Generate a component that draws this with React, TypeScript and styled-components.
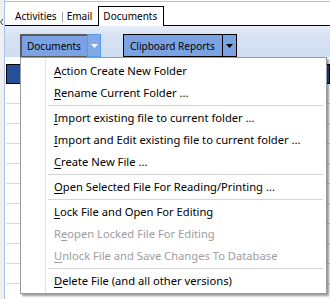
import React from "react";
import styled, { createGlobalStyle } from "styled-components";

const GlobalStyle = createGlobalStyle`
  html, body {
    margin: 0;
    padding: 0;
    background: #ffffff;
  }
  body {
    font-family: "Noto Sans", "Open Sans", sans-serif;
    color: #000;
  }
`;

const Frame = styled.div`
  position: relative;
  width: 330px;
  height: 299px;
  overflow: hidden;
  display: flex;
  background: #ffffff;
`;

const Rail = styled.div`
  width: 4px;
  flex: none;
  background: #f0f0f0;
  border-right: 1px solid #a9c4ea;
  padding-top: 8px;
  box-sizing: content-box;
`;

const Main = styled.div`
  flex: 1;
  display: flex;
  flex-direction: column;
  padding-top: 1px;
  min-width: 0;
`;

const TabStrip = styled.div`
  height: 23px;
  flex: none;
  display: flex;
  align-items: flex-end;
  padding-left: 3px;
  border-top: 1px solid #a9c4ea;
  border-bottom: 1px solid #000;
  background: #ffffff;
`;

const Tab = styled.div<{ $active?: boolean; $divider?: boolean }>`
  position: relative;
  height: ${(p) => (p.$active ? "19px" : "19px")};
  padding: 0 6px 0 ${(p) => (p.$active ? "4px" : "7px")};
  display: flex;
  align-items: center;
  font-size: 10px;
  box-sizing: border-box;
  background: #ffffff;
  ${(p) =>
    p.$active &&
    `
    border: 1px solid #000;
    border-bottom: none;
    margin-bottom: -1px;
    height: 20px;
    padding-bottom: 1px;
  `}
  &::after {
    content: "";
    display: ${(p) => (p.$divider ? "block" : "none")};
    position: absolute;
    right: 0;
    top: 6px;
    height: 10px;
    width: 1px;
    background: #a0a0a0;
  }
`;

const Toolbar = styled.div`
  height: 31px;
  flex: none;
  display: flex;
  align-items: flex-start;
  padding: 8px 0 0 15px;
  box-sizing: border-box;
  background: linear-gradient(#e7eef9, #d6e2f3 30%, #d0dcf1);
`;

const SplitButton = styled.div`
  display: flex;
  height: 23px;
  margin-right: 22px;
`;

const MainPart = styled.div<{ $style: "pressed" | "plain" }>`
  display: flex;
  align-items: center;
  font-size: 10px;
  background: #7ba3e4;
  box-sizing: border-box;
  ${(p) =>
    p.$style === "pressed"
      ? `
    border-top: 2px solid #5a5a5a;
    border-left: 2px solid #5a5a5a;
    border-bottom: 1px solid #5a5a5a;
    padding: 0 6px 0 5px;
    width: 67px;
  `
      : `
    border: 1px solid #000;
    padding: 0 6px;
    width: 100px;
  `}
`;

const ArrowPart = styled.div<{ $style: "pressed" | "plain" }>`
  width: 14px;
  display: flex;
  align-items: center;
  justify-content: center;
  box-sizing: border-box;
  background: ${(p) => (p.$style === "pressed" ? "#82a8e8" : "#7ba3e4")};
  border: 1px solid ${(p) => (p.$style === "pressed" ? "#4f9cf0" : "#000")};
  ${(p) => p.$style === "plain" && "border-left: none;"}
`;

const GridArea = styled.div`
  flex: 1;
  display: flex;
  flex-direction: column;
  padding: 7px 0 0 1px;
  background: #ffffff;
`;

const GridRow = styled.div<{ $selected?: boolean }>`
  height: 20px;
  flex: none;
  box-sizing: border-box;
  background: ${(p) => (p.$selected ? "#24509a" : "#ffffff")};
  border: ${(p) => (p.$selected ? "1px solid #000" : "none")};
  border-bottom: 1px solid ${(p) => (p.$selected ? "#000" : "#d9d9d9")};
`;

const Menu = styled.div`
  position: absolute;
  left: 20px;
  top: 57px;
  width: 307px;
  box-sizing: border-box;
  padding: 2px 2px 1px;
  border: 1px solid #9a9a9a;
  background: #ffffff
    linear-gradient(90deg, transparent 24px, #e2e2e2 24px, #e2e2e2 25px, transparent 25px);
  box-shadow: 2px 2px 2px rgba(0, 0, 0, 0.4);
  display: flex;
  flex-direction: column;
`;

const Item = styled.div<{ $disabled?: boolean }>`
  height: 22px;
  line-height: 22px;
  padding-left: 31px;
  font-size: 11.2px;
  white-space: nowrap;
  color: ${(p) => (p.$disabled ? "#9d9d9d" : "#000")};
`;

const Key = styled.span`
  text-decoration: underline;
  text-underline-offset: 2px;
`;

const Separator = styled.div`
  height: 1px;
  margin: 1px 1px 1px 25px;
  background: #d5d5d5;
`;

type Entry = { label: string; key: number; disabled?: boolean } | "sep";

const entries: Entry[] = [
  { label: "Action Create New Folder", key: 0 },
  { label: "Rename Current Folder ...", key: 0 },
  "sep",
  { label: "Import existing file to current folder ...", key: 0 },
  { label: "Import and Edit existing file to current folder ...", key: 0 },
  { label: "Create New File ...", key: 0 },
  "sep",
  { label: "Open Selected File For Reading/Printing ...", key: 0 },
  "sep",
  { label: "Lock File and Open For Editing", key: 0 },
  { label: "Reopen Locked File For Editing", key: 1, disabled: true },
  { label: "Unlock File and Save Changes To Database", key: 0, disabled: true },
  "sep",
  { label: "Delete File (and all other versions)", key: 0 },
];

const DownArrow = ({ color }: { color: string }) => (
  <svg width="7" height="4" viewBox="0 0 7 4">
    <polygon points="0,0 7,0 3.5,4" fill={color} />
  </svg>
);

const App: React.FC = () => {
  return (
    <Frame>
      <GlobalStyle />
      <Rail>
        <svg width="3" height="6" viewBox="0 0 3 6">
          <polyline points="3,0 0.5,3 3,6" fill="none" stroke="#333" strokeWidth="1" />
        </svg>
      </Rail>
      <Main>
        <TabStrip>
          <Tab $divider>Activities</Tab>
          <Tab style={{ paddingLeft: 4 }}>Email</Tab>
          <Tab $active>Documents</Tab>
        </TabStrip>
        <Toolbar>
          <SplitButton>
            <MainPart $style="pressed">Documents</MainPart>
            <ArrowPart $style="pressed">
              <DownArrow color="#ffffff" />
            </ArrowPart>
          </SplitButton>
          <SplitButton>
            <MainPart $style="plain">Clipboard Reports</MainPart>
            <ArrowPart $style="plain">
              <DownArrow color="#000000" />
            </ArrowPart>
          </SplitButton>
        </Toolbar>
        <GridArea>
          <GridRow $selected />
          <GridRow />
          <GridRow />
          <GridRow />
          <GridRow />
          <GridRow />
          <GridRow />
          <GridRow />
          <GridRow />
          <GridRow />
          <GridRow />
        </GridArea>
      </Main>
      <Menu>
        {entries.map((e, i) =>
          e === "sep" ? (
            <Separator key={i} />
          ) : (
            <Item key={i} $disabled={e.disabled}>
              {e.label.slice(0, e.key)}
              <Key>{e.label[e.key]}</Key>
              {e.label.slice(e.key + 1)}
            </Item>
          )
        )}
      </Menu>
    </Frame>
  );
};

export default App;
